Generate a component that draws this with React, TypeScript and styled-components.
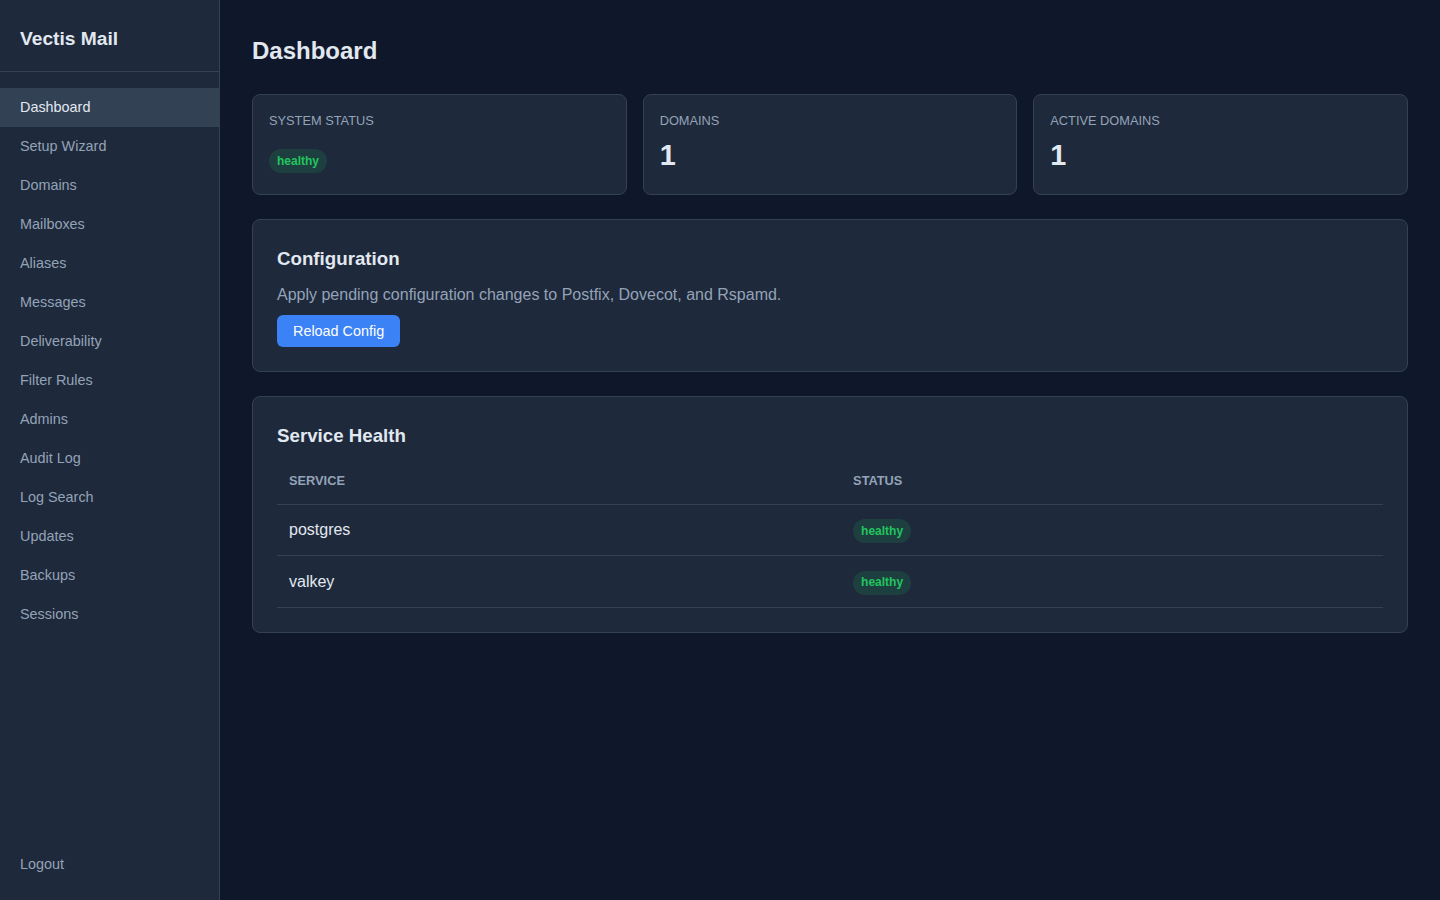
import { createGlobalStyle } from "styled-components";
import styled from "styled-components";

const GlobalStyle = createGlobalStyle`
  * { box-sizing: border-box; }
  body {
    margin: 0;
    background: #0f172a;
    color: #e2e8f0;
    font-family: "Liberation Sans", Arial, sans-serif;
    line-height: 1.6;
  }
`;

const NAV_ITEMS = [
  "Dashboard",
  "Setup Wizard",
  "Domains",
  "Mailboxes",
  "Aliases",
  "Messages",
  "Deliverability",
  "Filter Rules",
  "Admins",
  "Audit Log",
  "Log Search",
  "Updates",
  "Backups",
  "Sessions",
];

const SERVICES = ["postgres", "valkey"];

const Layout = styled.div`
  display: flex;
  min-height: 100vh;
`;

const Sidebar = styled.aside`
  width: 220px;
  flex-shrink: 0;
  display: flex;
  flex-direction: column;
  background: #1e293b;
  border-right: 1px solid #334155;
`;

const Brand = styled.div`
  height: 72px;
  padding: 24px 20px 0;
  font-size: 19.2px;
  font-weight: 700;
  line-height: 29px;
  border-bottom: 1px solid #334155;
`;

const Nav = styled.nav`
  flex: 1;
  padding: 16px 0;
`;

const NavLink = styled.a<{ $active?: boolean }>`
  display: block;
  padding: 8px 20px;
  font-size: 14.4px;
  line-height: 23px;
  color: ${(p) => (p.$active ? "#e2e8f0" : "#94a3b8")};
  background: ${(p) => (p.$active ? "#334155" : "transparent")};
`;

const SidebarFooter = styled.div`
  padding: 16px 0;
`;

const Main = styled.main`
  flex: 1;
  min-width: 0;
  padding: 32px;
`;

const PageTitle = styled.h1`
  margin: 0 0 24px;
  font-size: 24px;
  font-weight: 700;
`;

const StatGrid = styled.div`
  display: grid;
  grid-template-columns: repeat(3, 1fr);
  gap: 16px;
  margin-bottom: 24px;
`;

const StatCard = styled.div`
  padding: 16px;
  background: #1e293b;
  border: 1px solid #334155;
  border-radius: 8px;
`;

const StatLabel = styled.div`
  font-size: 12.8px;
  color: #94a3b8;
  text-transform: uppercase;
`;

const StatValue = styled.div`
  font-size: 28.8px;
  font-weight: 700;
`;

const Badge = styled.span`
  display: inline-block;
  padding: 2.4px 8px;
  border-radius: 12px;
  font-size: 12px;
  font-weight: 600;
  color: #22c55e;
  background: rgba(34, 197, 94, 0.15);
`;

const Panel = styled.section`
  padding: 24px;
  margin-bottom: 24px;
  background: #1e293b;
  border: 1px solid #334155;
  border-radius: 8px;
`;

const PanelTitle = styled.h3`
  margin: 0 0 8px;
  font-size: 18.72px;
  font-weight: 700;
`;

const PanelText = styled.p`
  margin: 0 0 8px;
  color: #94a3b8;
`;

const PrimaryButton = styled.button`
  display: block;
  height: 32px;
  padding: 0 16px;
  border: none;
  border-radius: 6px;
  background: #3b82f6;
  color: #ffffff;
  font-family: inherit;
  font-size: 14.4px;
`;

const Table = styled.table`
  width: 100%;
  border-collapse: collapse;
`;

const HeadCell = styled.th`
  padding: 12px;
  font-size: 12.8px;
  font-weight: 600;
  text-align: left;
  text-transform: uppercase;
  color: #94a3b8;
  border-bottom: 1px solid #334155;
`;

const Cell = styled.td`
  padding: 12px;
  border-bottom: 1px solid #334155;
`;

export default function App() {
  return (
    <>
      <GlobalStyle />
      <Layout>
        <Sidebar>
          <Brand>Vectis Mail</Brand>
          <Nav>
            {NAV_ITEMS.map((item, i) => (
              <NavLink key={item} $active={i === 0}>
                {item}
              </NavLink>
            ))}
          </Nav>
          <SidebarFooter>
            <NavLink>Logout</NavLink>
          </SidebarFooter>
        </Sidebar>
        <Main>
          <PageTitle>Dashboard</PageTitle>
          <StatGrid>
            <StatCard>
              <StatLabel>System Status</StatLabel>
              <StatValue>
                <Badge>healthy</Badge>
              </StatValue>
            </StatCard>
            <StatCard>
              <StatLabel>Domains</StatLabel>
              <StatValue>1</StatValue>
            </StatCard>
            <StatCard>
              <StatLabel>Active Domains</StatLabel>
              <StatValue>1</StatValue>
            </StatCard>
          </StatGrid>
          <Panel>
            <PanelTitle>Configuration</PanelTitle>
            <PanelText>Apply pending configuration changes to Postfix, Dovecot, and Rspamd.</PanelText>
            <PrimaryButton>Reload Config</PrimaryButton>
          </Panel>
          <Panel>
            <PanelTitle>Service Health</PanelTitle>
            <Table>
              <thead>
                <tr>
                  <HeadCell>Service</HeadCell>
                  <HeadCell>Status</HeadCell>
                </tr>
              </thead>
              <tbody>
                {SERVICES.map((name) => (
                  <tr key={name}>
                    <Cell>{name}</Cell>
                    <Cell>
                      <Badge>healthy</Badge>
                    </Cell>
                  </tr>
                ))}
              </tbody>
            </Table>
          </Panel>
        </Main>
      </Layout>
    </>
  );
}
